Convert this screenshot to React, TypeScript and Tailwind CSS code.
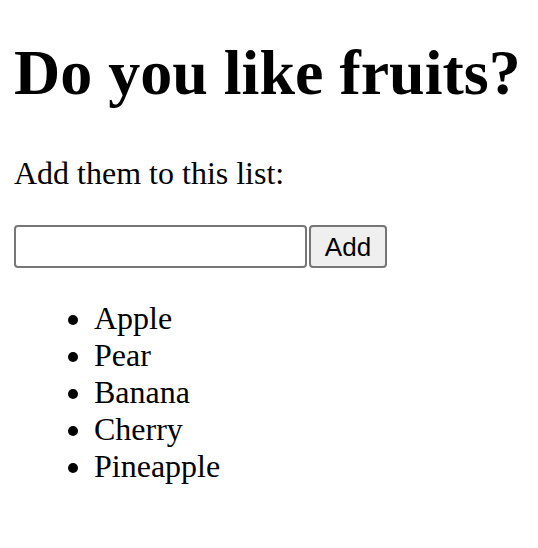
import React from "react";

export default function App() {
  const fruits = ["Apple", "Pear", "Banana", "Cherry", "Pineapple"];
  return (
    <div className="min-h-[548px] bg-white text-black px-[14px] pt-[36px] font-['Liberation_Serif',serif]">
      <h1 className="text-[64px] leading-[74px] font-bold">Do you like fruits?</h1>
      <p className="mt-[45px] text-[32px] leading-[37px]">Add them to this list:</p>
      <div className="mt-[33px] flex items-stretch gap-[2px]">
        <input
          type="text"
          className="w-[293px] h-[43px] border-2 border-[#767676] rounded-[4px] bg-white px-[4px] text-[26px] outline-none"
        />
        <button className="w-[78px] h-[43px] border-2 border-[#767676] rounded-[4px] bg-[#efefef] text-[26px] font-['Liberation_Sans',Arial,sans-serif] leading-none">
          Add
        </button>
      </div>
      <ul className="mt-[32px] list-disc pl-[80px] text-[32px] leading-[37px]">
        {fruits.map((f) => (
          <li key={f}>{f}</li>
        ))}
      </ul>
    </div>
  );
}
